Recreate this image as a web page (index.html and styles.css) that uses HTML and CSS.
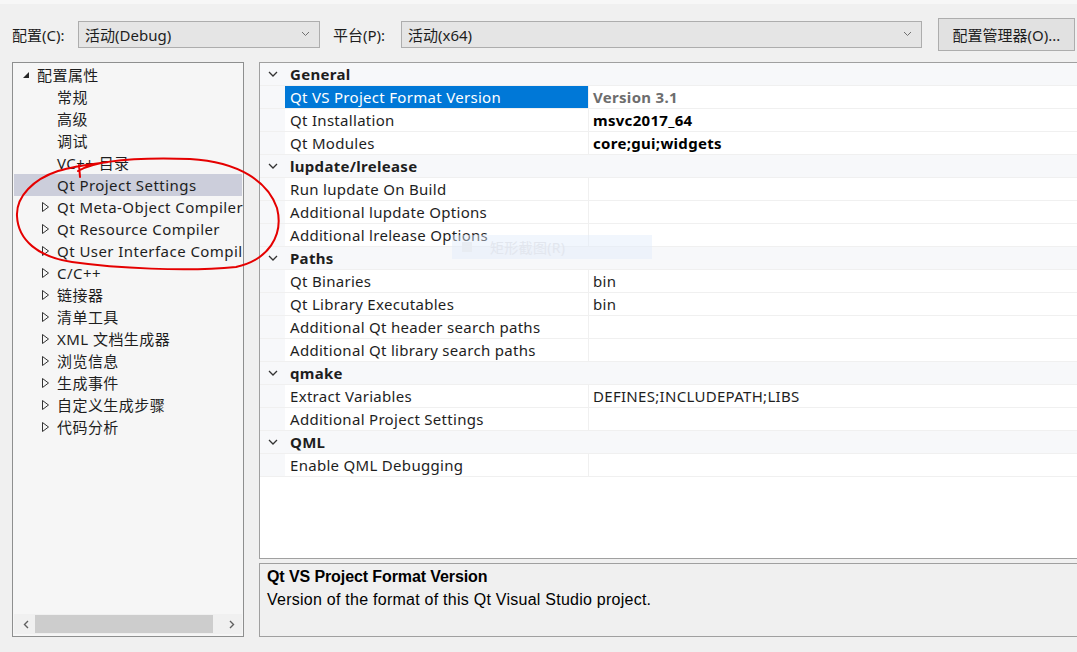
FILE: index.html
```html
<!DOCTYPE html>
<html lang="zh-CN">
<head>
<meta charset="utf-8">
<title>属性页</title>
<link rel="stylesheet" href="styles.css">
</head>
<body>
<div class="window">
  <div class="toolbar">
    <span class="lbl lbl-config">配置(C):</span>
    <div class="combo combo-config"><span>活动(Debug)</span><svg class="chev" width="9" height="6" viewBox="0 0 9 6"><path d="M1 1 L4.5 4.5 L8 1" fill="none" stroke="#707070" stroke-width="1"/></svg></div>
    <span class="lbl lbl-platform">平台(P):</span>
    <div class="combo combo-platform"><span>活动(x64)</span><svg class="chev" width="9" height="6" viewBox="0 0 9 6"><path d="M1 1 L4.5 4.5 L8 1" fill="none" stroke="#707070" stroke-width="1"/></svg></div>
    <div class="btn">配置管理器(O)...</div>
  </div>
  <div class="content">
    <div class="tree">
      <div class="tree-items">
        <div class="ti root"><span class="exp"><svg width="8" height="8" viewBox="0 0 8 8"><path d="M7 1 L7 7 L1 7 Z" fill="#262626"/></svg></span><span class="tt">配置属性</span></div>
        <div class="ti child"><span class="exp"></span><span class="tt">常规</span></div>
        <div class="ti child"><span class="exp"></span><span class="tt">高级</span></div>
        <div class="ti child"><span class="exp"></span><span class="tt">调试</span></div>
        <div class="ti child"><span class="exp"></span><span class="tt">VC++ 目录</span></div>
        <div class="ti child sel"><span class="exp"></span><span class="tt">Qt Project Settings</span></div>
        <div class="ti child"><span class="exp"><svg width="9" height="12" viewBox="0 0 9 12"><path d="M1.5 1.5 L7.5 6 L1.5 10.5 Z" fill="none" stroke="#333" stroke-width="1"/></svg></span><span class="tt">Qt Meta-Object Compiler</span></div>
        <div class="ti child"><span class="exp"><svg width="9" height="12" viewBox="0 0 9 12"><path d="M1.5 1.5 L7.5 6 L1.5 10.5 Z" fill="none" stroke="#333" stroke-width="1"/></svg></span><span class="tt">Qt Resource Compiler</span></div>
        <div class="ti child"><span class="exp"><svg width="9" height="12" viewBox="0 0 9 12"><path d="M1.5 1.5 L7.5 6 L1.5 10.5 Z" fill="none" stroke="#333" stroke-width="1"/></svg></span><span class="tt">Qt User Interface Compiler</span></div>
        <div class="ti child"><span class="exp"><svg width="9" height="12" viewBox="0 0 9 12"><path d="M1.5 1.5 L7.5 6 L1.5 10.5 Z" fill="none" stroke="#333" stroke-width="1"/></svg></span><span class="tt">C/C++</span></div>
        <div class="ti child"><span class="exp"><svg width="9" height="12" viewBox="0 0 9 12"><path d="M1.5 1.5 L7.5 6 L1.5 10.5 Z" fill="none" stroke="#333" stroke-width="1"/></svg></span><span class="tt">链接器</span></div>
        <div class="ti child"><span class="exp"><svg width="9" height="12" viewBox="0 0 9 12"><path d="M1.5 1.5 L7.5 6 L1.5 10.5 Z" fill="none" stroke="#333" stroke-width="1"/></svg></span><span class="tt">清单工具</span></div>
        <div class="ti child"><span class="exp"><svg width="9" height="12" viewBox="0 0 9 12"><path d="M1.5 1.5 L7.5 6 L1.5 10.5 Z" fill="none" stroke="#333" stroke-width="1"/></svg></span><span class="tt">XML 文档生成器</span></div>
        <div class="ti child"><span class="exp"><svg width="9" height="12" viewBox="0 0 9 12"><path d="M1.5 1.5 L7.5 6 L1.5 10.5 Z" fill="none" stroke="#333" stroke-width="1"/></svg></span><span class="tt">浏览信息</span></div>
        <div class="ti child"><span class="exp"><svg width="9" height="12" viewBox="0 0 9 12"><path d="M1.5 1.5 L7.5 6 L1.5 10.5 Z" fill="none" stroke="#333" stroke-width="1"/></svg></span><span class="tt">生成事件</span></div>
        <div class="ti child"><span class="exp"><svg width="9" height="12" viewBox="0 0 9 12"><path d="M1.5 1.5 L7.5 6 L1.5 10.5 Z" fill="none" stroke="#333" stroke-width="1"/></svg></span><span class="tt">自定义生成步骤</span></div>
        <div class="ti child"><span class="exp"><svg width="9" height="12" viewBox="0 0 9 12"><path d="M1.5 1.5 L7.5 6 L1.5 10.5 Z" fill="none" stroke="#333" stroke-width="1"/></svg></span><span class="tt">代码分析</span></div>
      </div>
      <div class="hscroll">
        <span class="arrow"><svg width="6" height="9" viewBox="0 0 6 9"><path d="M5 1 L1.5 4.5 L5 8" fill="none" stroke="#606060" stroke-width="1.4"/></svg></span>
        <div class="track"><div class="thumb"></div></div>
        <span class="arrow"><svg width="6" height="9" viewBox="0 0 6 9"><path d="M1 1 L4.5 4.5 L1 8" fill="none" stroke="#606060" stroke-width="1.4"/></svg></span>
      </div>
    </div>
    <div class="right">
      <div class="grid">
        <div class="row cat"><span class="gut"><svg width="10" height="6" viewBox="0 0 10 6"><path d="M1 1 L5 5 L9 1" fill="none" stroke="#333" stroke-width="1.3"/></svg></span><span class="name">General</span></div>
        <div class="row"><span class="gut"></span><span class="name selected">Qt VS Project Format Version</span><span class="val gray">Version 3.1</span></div>
        <div class="row"><span class="gut"></span><span class="name">Qt Installation</span><span class="val bold">msvc2017_64</span></div>
        <div class="row"><span class="gut"></span><span class="name">Qt Modules</span><span class="val bold">core;gui;widgets</span></div>
        <div class="row cat"><span class="gut"><svg width="10" height="6" viewBox="0 0 10 6"><path d="M1 1 L5 5 L9 1" fill="none" stroke="#333" stroke-width="1.3"/></svg></span><span class="name">lupdate/lrelease</span></div>
        <div class="row"><span class="gut"></span><span class="name">Run lupdate On Build</span><span class="val"></span></div>
        <div class="row"><span class="gut"></span><span class="name">Additional lupdate Options</span><span class="val"></span></div>
        <div class="row"><span class="gut"></span><span class="name">Additional lrelease Options</span><span class="val"></span></div>
        <div class="row cat"><span class="gut"><svg width="10" height="6" viewBox="0 0 10 6"><path d="M1 1 L5 5 L9 1" fill="none" stroke="#333" stroke-width="1.3"/></svg></span><span class="name">Paths</span></div>
        <div class="row"><span class="gut"></span><span class="name">Qt Binaries</span><span class="val">bin</span></div>
        <div class="row"><span class="gut"></span><span class="name">Qt Library Executables</span><span class="val">bin</span></div>
        <div class="row"><span class="gut"></span><span class="name">Additional Qt header search paths</span><span class="val"></span></div>
        <div class="row"><span class="gut"></span><span class="name">Additional Qt library search paths</span><span class="val"></span></div>
        <div class="row cat"><span class="gut"><svg width="10" height="6" viewBox="0 0 10 6"><path d="M1 1 L5 5 L9 1" fill="none" stroke="#333" stroke-width="1.3"/></svg></span><span class="name">qmake</span></div>
        <div class="row"><span class="gut"></span><span class="name">Extract Variables</span><span class="val">DEFINES;INCLUDEPATH;LIBS</span></div>
        <div class="row"><span class="gut"></span><span class="name">Additional Project Settings</span><span class="val"></span></div>
        <div class="row cat"><span class="gut"><svg width="10" height="6" viewBox="0 0 10 6"><path d="M1 1 L5 5 L9 1" fill="none" stroke="#333" stroke-width="1.3"/></svg></span><span class="name">QML</span></div>
        <div class="row"><span class="gut"></span><span class="name">Enable QML Debugging</span><span class="val"></span></div>
      </div>
      <div class="desc">
        <div class="desc-title">Qt VS Project Format Version</div>
        <div class="desc-text">Version of the format of this Qt Visual Studio project.</div>
      </div>
    </div>
  </div>
</div>
<div class="watermark"><span class="wm-icon"></span><span class="wm-text">矩形截图(R)</span></div>
<svg class="annot" width="1077" height="652" viewBox="0 0 1077 652">
  <path d="M80,177 L79,165 M78,171 C95,161 130,157 190,159 C240,162 268,182 277,208 C284,236 268,260 236,267 C185,272 115,268 72,262 C38,257 18,240 17,216 C16,196 34,179 58,171 C74,166 92,164 108,162" fill="none" stroke="#e50000" stroke-width="2" stroke-linecap="round"/>
</svg>
</body>
</html>
```
FILE: styles.css
```css
* { box-sizing: border-box; }
html, body { margin: 0; padding: 0; }
body {
  width: 1077px;
  height: 652px;
  overflow: hidden;
  background: #f0f0f0;
  font-family: "Noto Sans", "Noto Sans CJK SC", sans-serif;
  font-size: 15px;
  letter-spacing: 0.3px;
  color: #1e1e1e;
  position: relative;
}
.window {
  width: 1100px;
  height: 652px;
  display: flex;
  flex-direction: column;
  background: linear-gradient(#f7f7f7 0, #f7f7f7 4px, #f0f0f0 4px);
}
.toolbar {
  height: 62px;
  display: flex;
  align-items: center;
  padding: 8px 0 0 12px;
}
.lbl { white-space: nowrap; line-height: 20px; letter-spacing: 0; }
.lbl-config { width: 66px; }
.lbl-platform { width: 68px; margin-left: 13px; }
.combo {
  height: 27px;
  background: #e5e5e5;
  border: 1px solid #adadad;
  display: flex;
  align-items: center;
  justify-content: space-between;
  padding: 0 9px 0 6px;
  letter-spacing: 0;
  margin-top: -2px;
}
.combo-config { width: 242px; }
.combo-platform { width: 521px; }
.chev { flex: none; }
.btn {
  margin-left: 16px;
  margin-top: -2px;
  width: 137px;
  height: 33px;
  background: #e1e1e1;
  border: 1px solid #adadad;
  display: flex;
  align-items: center;
  justify-content: center;
  white-space: nowrap;
  letter-spacing: 0;
}
.content {
  display: flex;
  padding-left: 12px;
  gap: 15px;
  height: 575px;
}
.tree {
  width: 232px;
  height: 575px;
  border: 1px solid #8e8f8f;
  background: #f6f6f6;
  display: flex;
  flex-direction: column;
}
.tree-items {
  flex: 1;
  padding-top: 1px;
  overflow: hidden;
}
.ti {
  height: 22px;
  display: flex;
  align-items: center;
  white-space: nowrap;
  margin: 0 1px;
  line-height: 22px;
  letter-spacing: 0.45px;
}
.ti .exp {
  width: 12px;
  display: flex;
  align-items: center;
  justify-content: center;
  flex: none;
}
.ti.root { padding-left: 6px; }
.ti.root .tt { margin-left: 5px; }
.ti.child { padding-left: 25px; }
.ti.child .tt { margin-left: 6px; }
.ti.sel { background: #cccedb; }
.hscroll {
  height: 20px;
  margin: 0 1px 2px;
  display: flex;
  align-items: center;
  background: #f0f0f0;
}
.hscroll .arrow {
  width: 21px;
  display: flex;
  justify-content: center;
  align-items: center;
}
.hscroll .arrow:first-child { padding-left: 2px; }
.track { flex: 1; height: 18px; display: flex; }
.thumb { width: 178px; height: 18px; background: #cdcdcd; }
.right {
  flex: 1;
  display: flex;
  flex-direction: column;
  gap: 4px;
}
.grid {
  height: 497px;
  border: 1px solid #a0a0a0;
  background: #fff;
}
.row {
  height: 23px;
  display: grid;
  grid-template-columns: 25px 304px 1fr;
  border-bottom: 1px solid #f0f0f0;
  line-height: 22px;
  white-space: nowrap;
}
.row .gut {
  background: #f7f8fa;
  display: flex;
  align-items: center;
  justify-content: center;
}
.row .name { padding-left: 5px; border-right: 1px solid #f0f0f0; }
.row .val { padding-left: 4px; }
.row.cat { background: #f7f8fa; grid-template-columns: 25px 1fr; }
.row.cat .name { font-weight: bold; border-right: none; }
.name.selected { background: #0078d7; color: #fff; }
.val.gray { color: #6d6d6d; font-weight: bold; }
.val.bold { font-weight: bold; color: #000; }
.desc {
  height: 74px;
  border: 1px solid #a0a0a0;
  background: #f0f0f0;
  padding: 2px 0 0 7px;
  font-family: "Liberation Sans", "Noto Sans CJK SC", sans-serif;
  font-size: 16px;
  color: #000;
}
.desc-title { font-weight: bold; line-height: 22px; letter-spacing: -0.1px; }
.desc-text { line-height: 24px; letter-spacing: 0.25px; }
.watermark {
  position: absolute;
  left: 452px;
  top: 235px;
  width: 200px;
  height: 24px;
  background: rgba(225, 235, 250, 0.45);
  display: flex;
  align-items: center;
  gap: 18px;
  padding-left: 10px;
  font-size: 14px;
  color: #e2e6ee;
}
.wm-icon { width: 10px; height: 10px; background: #e8ecf2; }
.annot { position: absolute; left: 0; top: 0; pointer-events: none; }
```
